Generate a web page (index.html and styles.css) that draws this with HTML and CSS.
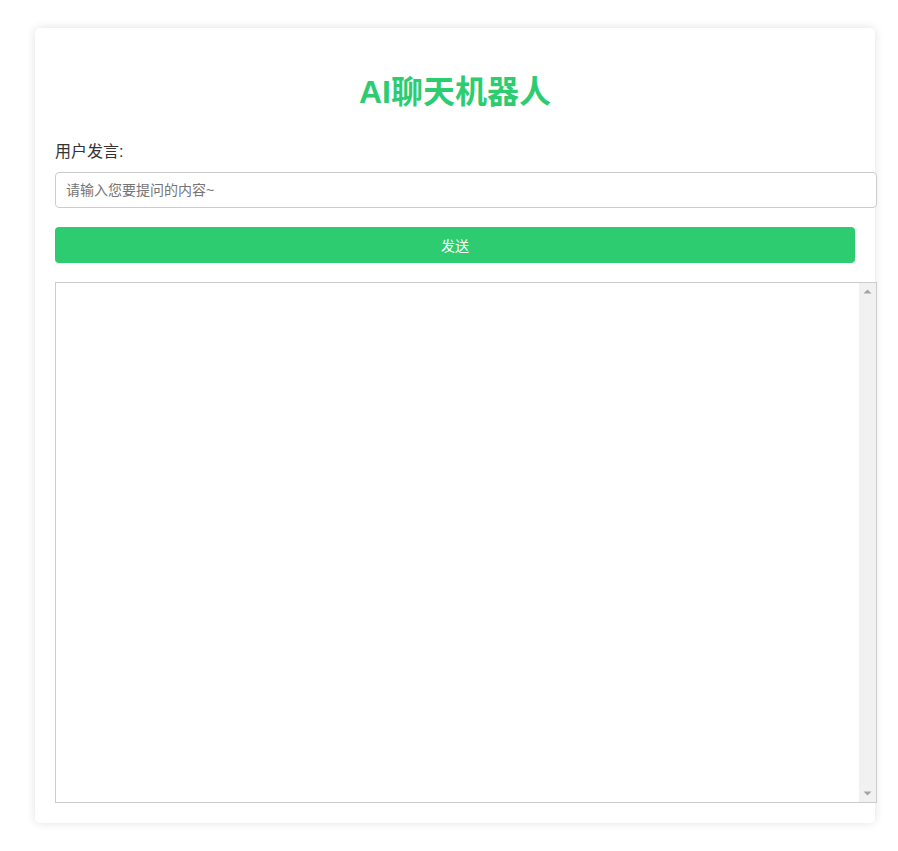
FILE: index.html
```html
<!DOCTYPE html>
<html lang="zh-CN">
<head>
    <meta charset="UTF-8">
    <meta name="viewport" content="width=device-width, initial-scale=1.0">
    <title>AI聊天机器人</title>
    <link rel="stylesheet" href="styles.css">
</head>
<body>
    <div class="chat-card">
        <h1>AI聊天机器人</h1>

        <label class="label" for="question">用户发言:</label>
        <input type="text" id="question" class="question" placeholder="请输入您要提问的内容~">

        <button class="btn-send" id="sendBtn">发送</button>

        <div class="answer-box">
            <textarea class="answer" id="answer" readonly></textarea>
            <!-- scrollbar drawn by hand, the headless browser hides the real one -->
            <div class="scrollbar">
                <svg class="arrow" width="17" height="17" viewBox="0 0 17 17"><path d="M4.5 10.5h8L8.5 6.5z" fill="#a3a3a3"/></svg>
                <svg class="arrow" width="17" height="17" viewBox="0 0 17 17"><path d="M4.5 6.5h8L8.5 10.5z" fill="#a3a3a3"/></svg>
            </div>
        </div>
    </div>
</body>
</html>
```

FILE: styles.css
```css
* {
    font-family: 'Liberation Sans', Arial, 'Noto Sans CJK SC', sans-serif;
}

body {
    margin: 0;
    background-color: #fff;
}

.chat-card {
    width: 800px;
    margin: 28px 0 26px 35px;
    padding: 20px;
    background-color: #fff;
    border-radius: 5px;
    box-shadow: 0 0 10px rgba(0, 0, 0, 0.12);
}

h1 {
    margin: 24px 0 30px;
    font-size: 32px;
    line-height: 40px;
    color: #2ecc71;
    text-align: center;
}

.label {
    display: block;
    margin-bottom: 10px;
    font-size: 16px;
    line-height: 20px;
    color: #333;
}

.question {
    display: block;
    width: 100%;
    padding: 8px 10px;
    border: 1px solid #ccc;
    border-radius: 4px;
    font-size: 14px;
    line-height: 18px;
    height: 18px;
    outline: none;
}

.question::placeholder {
    color: #757575;
}

.btn-send {
    display: block;
    width: 100%;
    height: 36px;
    margin-top: 19px;
    border: none;
    border-radius: 4px;
    background-color: #2ecc71;
    color: #fff;
    font-size: 14px;
    cursor: pointer;
}

.answer-box {
    position: relative;
    margin-top: 19px;
    width: 822px;
}

.answer {
    display: block;
    box-sizing: border-box;
    width: 100%;
    height: 521px;
    padding: 10px;
    border: 1px solid #ccc;
    font-size: 14px;
    resize: none;
    overflow-y: scroll;
    outline: none;
}

.scrollbar {
    position: absolute;
    top: 1px;
    right: 1px;
    bottom: 1px;
    width: 17px;
    background-color: #f1f1f1;
    display: flex;
    flex-direction: column;
    justify-content: space-between;
}

.arrow {
    display: block;
}
```
